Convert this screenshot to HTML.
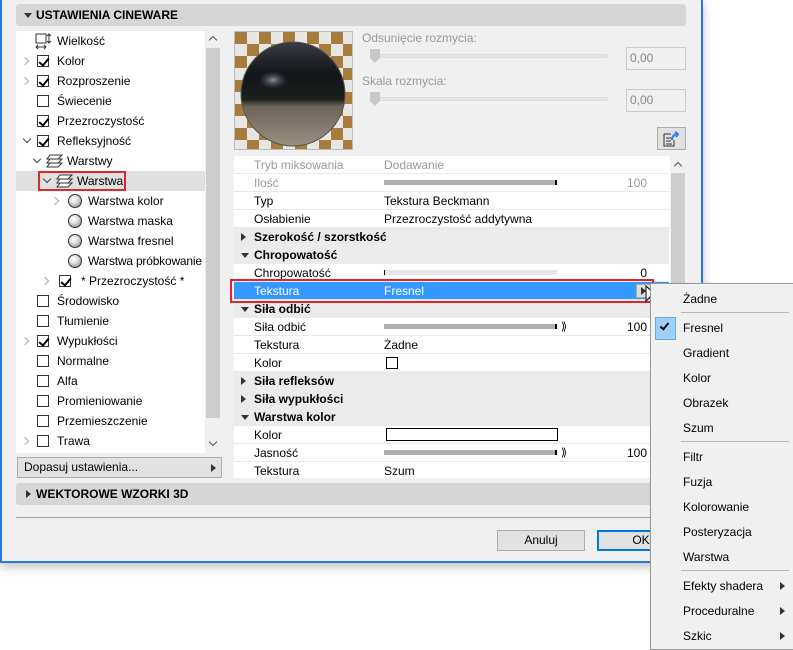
<!DOCTYPE html>
<html><head><meta charset="utf-8">
<style>
*{box-sizing:border-box;margin:0;padding:0}
body{width:793px;height:650px;background:#fff;position:relative;overflow:hidden;font-family:"Liberation Sans",sans-serif;font-size:12px;color:#000}
.a{position:absolute}
#dlg{left:0;top:0;width:703px;height:563px;background:#f0f0f0;border-left:2px solid #2b79d6;border-right:2px solid #2b79d6;border-bottom:2px solid #2b79d6;box-shadow:0 4px 10px rgba(0,0,0,.25)}
.bar{background:#d6d6d6;border-radius:3px;font-weight:bold;font-size:12px}
.tri-d{width:0;height:0;border-left:4px solid transparent;border-right:4px solid transparent;border-top:5px solid #333}
.tri-r{width:0;height:0;border-top:4px solid transparent;border-bottom:4px solid transparent;border-left:5px solid #333}
.row{position:absolute;left:0;width:189px;height:20px;line-height:20px;white-space:nowrap}
.cb{position:absolute;width:12px;height:12px;border:1px solid #333;background:#fff;top:4px}
.cb.on::after{content:"";position:absolute;left:3px;top:0px;width:4px;height:8px;border-right:2px solid #000;border-bottom:2px solid #000;transform:rotate(40deg)}
.chevd{position:absolute;top:6px;width:6px;height:6px;border-right:1.5px solid #444;border-bottom:1.5px solid #444;transform:rotate(45deg)}
.chevr{position:absolute;top:7px;width:6px;height:6px;border-right:1.5px solid #aaa;border-bottom:1.5px solid #aaa;transform:rotate(-45deg)}
.sph{position:absolute;top:3px;width:14px;height:14px;border-radius:50%;border:1px solid #333;background:radial-gradient(circle at 40% 35%,#fff 0,#ddd 40%,#777 100%)}
.t{position:absolute;top:0;white-space:nowrap}
.pr{position:absolute;left:0;width:435px;height:18px;line-height:18px;background:#fff;border-bottom:1px solid #e8e8e8;white-space:nowrap}
.pr.g{background:#ebebeb;font-weight:bold;border-bottom:none}
.pr .l{position:absolute;left:20px}
.pr .v{position:absolute;left:150px}
.pr .n{position:absolute;right:22px}
.pr .tri-d,.pr .tri-r{position:absolute;left:7px;top:7px}
.pr .tri-r{top:5px}
.sl{position:absolute;left:150px;top:6px;width:173px;height:5px;background:#b0b0b0;border-right:2px solid #000}
.mi{position:absolute;left:32px;height:20px;line-height:20px;font-size:12px;white-space:nowrap}
.sep{position:absolute;left:30px;width:108px;height:1px;background:#bbb}
.sub{position:absolute;right:8px;width:0;height:0;border-top:4px solid transparent;border-bottom:4px solid transparent;border-left:5px solid #333}
.btn{position:absolute;height:21px;background:#e1e1e1;border:1px solid #adadad;text-align:center;line-height:19px}
</style></head><body>
<div id="dlg" class="a">
 <div class="a bar" style="left:14px;top:4px;width:670px;height:22px;line-height:22px"><div class="a tri-d" style="left:8px;top:9px"></div><span class="a" style="left:20px">USTAWIENIA CINEWARE</span></div>

 <div class="a" style="left:14px;top:31px;width:189px;height:422px;background:#fff;overflow:hidden">
  <div class="row" style="top:0"><svg class="a" style="left:19px;top:2px" width="18" height="17"><rect x="1" y="1" width="10" height="9" fill="none" stroke="#333"/><path d="M14 1v9M12 3l2-2 2 2M12 8l2 2 2-2M1 14h10M3 12l-2 2 2 2M9 12l2 2-2 2" fill="none" stroke="#333"/></svg><span class="t" style="left:41px">Wielkość</span></div>
  <div class="row" style="top:20px"><div class="chevr" style="left:6px"></div><div class="cb on" style="left:21px"></div><span class="t" style="left:41px">Kolor</span></div>
  <div class="row" style="top:40px"><div class="chevr" style="left:6px"></div><div class="cb on" style="left:21px"></div><span class="t" style="left:41px">Rozproszenie</span></div>
  <div class="row" style="top:60px"><div class="cb" style="left:21px"></div><span class="t" style="left:41px">Świecenie</span></div>
  <div class="row" style="top:80px"><div class="cb on" style="left:21px"></div><span class="t" style="left:41px">Przezroczystość</span></div>
  <div class="row" style="top:100px"><div class="chevd" style="left:8px;top:5px"></div><div class="cb on" style="left:21px"></div><span class="t" style="left:41px">Refleksyjność</span></div>
  <div class="row" style="top:120px"><div class="chevd" style="left:18px;top:5px"></div><svg class="a" style="left:30px;top:3px" width="17" height="14"><path d="M4 1h12l-4 4H1zM4 5h12l-4 4H1zM4 9h12l-4 4H1z" fill="#fff" stroke="#333"/></svg><span class="t" style="left:51px">Warstwy</span></div>
  <div class="row" style="top:140px;background:#e0e0e0;width:189px"><div class="a" style="left:22px;top:0;width:88px;height:20px;border:2px solid #e0262a"></div><div class="chevd" style="left:28px;top:5px"></div><svg class="a" style="left:40px;top:3px" width="17" height="14"><path d="M4 1h12l-4 4H1zM4 5h12l-4 4H1zM4 9h12l-4 4H1z" fill="#fff" stroke="#333"/></svg><span class="t" style="left:61px">Warstwa</span></div>
  <div class="row" style="top:160px"><div class="chevr" style="left:36px"></div><div class="sph" style="left:52px"></div><span class="t" style="left:72px">Warstwa kolor</span></div>
  <div class="row" style="top:180px"><div class="sph" style="left:52px"></div><span class="t" style="left:72px">Warstwa maska</span></div>
  <div class="row" style="top:200px"><div class="sph" style="left:52px"></div><span class="t" style="left:72px">Warstwa fresnel</span></div>
  <div class="row" style="top:220px"><div class="sph" style="left:52px"></div><span class="t" style="left:72px;letter-spacing:-0.2px">Warstwa próbkowanie</span></div>
  <div class="row" style="top:240px"><div class="chevr" style="left:26px"></div><div class="cb on" style="left:43px"></div><span class="t" style="left:65px">* Przezroczystość *</span></div>
  <div class="row" style="top:260px"><div class="cb" style="left:21px"></div><span class="t" style="left:41px">Środowisko</span></div>
  <div class="row" style="top:280px"><div class="cb" style="left:21px"></div><span class="t" style="left:41px">Tłumienie</span></div>
  <div class="row" style="top:300px"><div class="chevr" style="left:6px"></div><div class="cb on" style="left:21px"></div><span class="t" style="left:41px">Wypukłości</span></div>
  <div class="row" style="top:320px"><div class="cb" style="left:21px"></div><span class="t" style="left:41px">Normalne</span></div>
  <div class="row" style="top:340px"><div class="cb" style="left:21px"></div><span class="t" style="left:41px">Alfa</span></div>
  <div class="row" style="top:360px"><div class="cb" style="left:21px"></div><span class="t" style="left:41px">Promieniowanie</span></div>
  <div class="row" style="top:380px"><div class="cb" style="left:21px"></div><span class="t" style="left:41px">Przemieszczenie</span></div>
  <div class="row" style="top:400px"><div class="chevr" style="left:6px"></div><div class="cb" style="left:21px"></div><span class="t" style="left:41px">Trawa</span></div>
 </div>
 <div class="a" style="left:203px;top:31px;width:15px;height:422px;background:#f0f0f0">
  <div class="a" style="left:5px;top:6px;width:6px;height:6px;border-left:1.5px solid #555;border-top:1.5px solid #555;transform:rotate(45deg)"></div>
  <div class="a" style="left:1px;top:17px;width:14px;height:370px;background:#cdcdcd"></div>
  <div class="a" style="left:5px;top:408px;width:6px;height:6px;border-right:1.5px solid #555;border-bottom:1.5px solid #555;transform:rotate(45deg)"></div>
 </div>
 <div class="a" style="left:15px;top:457px;width:205px;height:21px;background:#e1e1e1;border:1px solid #adadad;line-height:19px;padding-left:6px">Dopasuj ustawienia...<div class="a tri-r" style="right:5px;top:6px"></div></div>

 <div class="a" style="left:232px;top:31px;width:119px;height:119px;border:1px solid #bbb;overflow:hidden">
  <svg width="117" height="117">
   <defs>
    <pattern id="ck" width="24" height="24" patternUnits="userSpaceOnUse"><rect width="24" height="24" fill="#e8e6e2"/><rect width="12" height="12" fill="#a87c3c"/><rect x="12" y="12" width="12" height="12" fill="#a87c3c"/></pattern>
    <linearGradient id="sg" x1="0" y1="0" x2="0" y2="1"><stop offset="0" stop-color="#3a3c44"/><stop offset=".3" stop-color="#15161a"/><stop offset=".55" stop-color="#1c1e1c"/><stop offset=".62" stop-color="#6b6458"/><stop offset="1" stop-color="#9a8f80"/></linearGradient>
    <radialGradient id="hl" cx=".5" cy=".5" r=".5"><stop offset="0" stop-color="#aab" stop-opacity=".8"/><stop offset="1" stop-color="#556" stop-opacity="0"/></radialGradient>
   </defs>
   <rect width="117" height="117" fill="url(#ck)"/>
   <circle cx="58" cy="62" r="52" fill="url(#sg)"/>
   <ellipse cx="38" cy="48" rx="14" ry="9" fill="url(#hl)"/>
   <circle cx="58" cy="62" r="52" fill="none" stroke="#555" stroke-width="1"/>
  </svg>
 </div>
 <div class="a" style="left:360px;top:31px;color:#999">Odsunięcie rozmycia:</div>
 <div class="a" style="left:368px;top:54px;width:238px;height:4px;background:#e6e6e6;border:1px solid #ddd"></div>
 <div class="a" style="left:368px;top:49px;width:10px;height:14px;background:#c8c8c8;clip-path:polygon(0 0,100% 0,100% 65%,50% 100%,0 65%)"></div>
 <div class="a" style="left:624px;top:47px;width:60px;height:23px;border:1px solid #ccc;background:#f0f0f0;color:#888;line-height:21px;padding-left:3px">0,00</div>
 <div class="a" style="left:360px;top:74px;color:#999">Skala rozmycia:</div>
 <div class="a" style="left:368px;top:97px;width:238px;height:4px;background:#e6e6e6;border:1px solid #ddd"></div>
 <div class="a" style="left:368px;top:92px;width:10px;height:14px;background:#c8c8c8;clip-path:polygon(0 0,100% 0,100% 65%,50% 100%,0 65%)"></div>
 <div class="a" style="left:624px;top:89px;width:60px;height:23px;border:1px solid #ccc;background:#f0f0f0;color:#888;line-height:21px;padding-left:3px">0,00</div>
 <div class="a" style="left:655px;top:127px;width:29px;height:23px;background:#e1e1e1;border:1px solid #adadad">
  <svg class="a" style="left:5px;top:3px" width="18" height="16"><path d="M1 3h7M1 3v12h10v-6M3 7h5M3 10h5M3 13h6" fill="none" stroke="#333"/><path d="M9 9q0-5 5-6M12 1l3 2-2 3" fill="none" stroke="#2a7fff" stroke-width="2"/></svg>
 </div>

 <div class="a" style="left:232px;top:156px;width:436px;height:322px;background:#fff;overflow:hidden">
  <div class="pr" style="top:0;color:#999"><span class="l">Tryb miksowania</span><span class="v">Dodawanie</span></div>
  <div class="pr" style="top:18px;color:#999"><span class="l">Ilość</span><div class="sl"></div><span class="n">100</span></div>
  <div class="pr" style="top:36px"><span class="l">Typ</span><span class="v">Tekstura Beckmann</span></div>
  <div class="pr" style="top:54px"><span class="l">Osłabienie</span><span class="v">Przezroczystość addytywna</span></div>
  <div class="pr g" style="top:72px"><div class="tri-r"></div><span class="l">Szerokość / szorstkość</span></div>
  <div class="pr g" style="top:90px"><div class="tri-d"></div><span class="l">Chropowatość</span></div>
  <div class="pr" style="top:108px"><span class="l">Chropowatość</span><div class="sl" style="background:#e6e6e6;border-right:none;border-left:1px solid #000"></div><span class="n">0</span></div>
  <div class="pr" style="top:126px;background:#3399ff;color:#fff"><span class="l">Tekstura</span><span class="v">Fresnel</span><div class="a" style="left:402px;top:2px;width:15px;height:14px;background:#ddd;border:1px solid #aaa"><div class="a tri-r" style="left:4px;top:2px"></div></div></div>
  <div class="pr g" style="top:144px"><div class="tri-d"></div><span class="l">Siła odbić</span></div>
  <div class="pr" style="top:162px"><span class="l">Siła odbić</span><div class="sl"></div><span class="a" style="left:327px;top:0;font-size:11px">&#x27EB;</span><span class="n">100</span></div>
  <div class="pr" style="top:180px"><span class="l">Tekstura</span><span class="v">Żadne</span></div>
  <div class="pr" style="top:198px"><span class="l">Kolor</span><div class="a" style="left:152px;top:3px;width:12px;height:12px;border:1px solid #000"></div></div>
  <div class="pr g" style="top:216px"><div class="tri-r"></div><span class="l">Siła refleksów</span></div>
  <div class="pr g" style="top:234px"><div class="tri-r"></div><span class="l">Siła wypukłości</span></div>
  <div class="pr g" style="top:252px"><div class="tri-d"></div><span class="l">Warstwa kolor</span></div>
  <div class="pr" style="top:270px"><span class="l">Kolor</span><div class="a" style="left:152px;top:2px;width:172px;height:13px;border:1px solid #000"></div></div>
  <div class="pr" style="top:288px"><span class="l">Jasność</span><div class="sl"></div><span class="a" style="left:327px;top:0;font-size:11px">&#x27EB;</span><span class="n">100</span></div>
  <div class="pr" style="top:306px"><span class="l">Tekstura</span><span class="v">Szum</span></div>
 </div>
 <div class="a" style="left:668px;top:156px;width:16px;height:322px;background:#f0f0f0">
  <div class="a" style="left:5px;top:7px;width:6px;height:6px;border-left:1.5px solid #555;border-top:1.5px solid #555;transform:rotate(45deg)"></div>
  <div class="a" style="left:1px;top:17px;width:14px;height:300px;background:#cdcdcd"></div>
 </div>
 <div class="a" style="left:228px;top:279px;width:424px;height:24px;border:2px solid #e0262a"></div>

 <div class="a bar" style="left:14px;top:483px;width:670px;height:22px;line-height:22px"><div class="a tri-r" style="left:10px;top:7px"></div><span class="a" style="left:20px">WEKTOROWE WZORKI 3D</span></div>
 <div class="a" style="left:14px;top:517px;width:670px;height:1px;background:#a0a0a0"></div>
 <div class="btn" style="left:495px;top:530px;width:88px">Anuluj</div>
 <div class="btn" style="left:595px;top:530px;width:88px;border:2px solid #0078d7;line-height:17px">OK</div>
</div>

<svg class="a" style="left:645px;top:285px" width="14" height="20"><path d="M1 1v15l4-4 3 6 2-1-3-6h5z" fill="#fff" stroke="#000"/></svg>

<div class="a" style="left:650px;top:283px;width:143px;height:367px;background:#f0f0f0;border:1px solid #999;border-right:none;box-shadow:2px 2px 4px rgba(0,0,0,.2)">
 <div class="mi" style="top:5px">Żadne</div>
 <div class="sep" style="top:28px"></div>
 <div class="a" style="left:4px;top:33px;width:21px;height:23px;background:#9fcffb;border:1px solid #6fa8e0"></div>
 <div class="a" style="left:11px;top:37px;width:5px;height:9px;border-right:2px solid #000;border-bottom:2px solid #000;transform:rotate(40deg)"></div>
 <div class="mi" style="top:34px">Fresnel</div>
 <div class="mi" style="top:59px">Gradient</div>
 <div class="mi" style="top:84px">Kolor</div>
 <div class="mi" style="top:109px">Obrazek</div>
 <div class="mi" style="top:134px">Szum</div>
 <div class="sep" style="top:157px"></div>
 <div class="mi" style="top:163px">Filtr</div>
 <div class="mi" style="top:188px">Fuzja</div>
 <div class="mi" style="top:213px">Kolorowanie</div>
 <div class="mi" style="top:238px">Posteryzacja</div>
 <div class="mi" style="top:263px">Warstwa</div>
 <div class="sep" style="top:286px"></div>
 <div class="mi" style="top:292px">Efekty shadera</div><div class="sub" style="top:298px"></div>
 <div class="mi" style="top:317px">Proceduralne</div><div class="sub" style="top:323px"></div>
 <div class="mi" style="top:342px">Szkic</div><div class="sub" style="top:348px"></div>
</div>
</body></html>
